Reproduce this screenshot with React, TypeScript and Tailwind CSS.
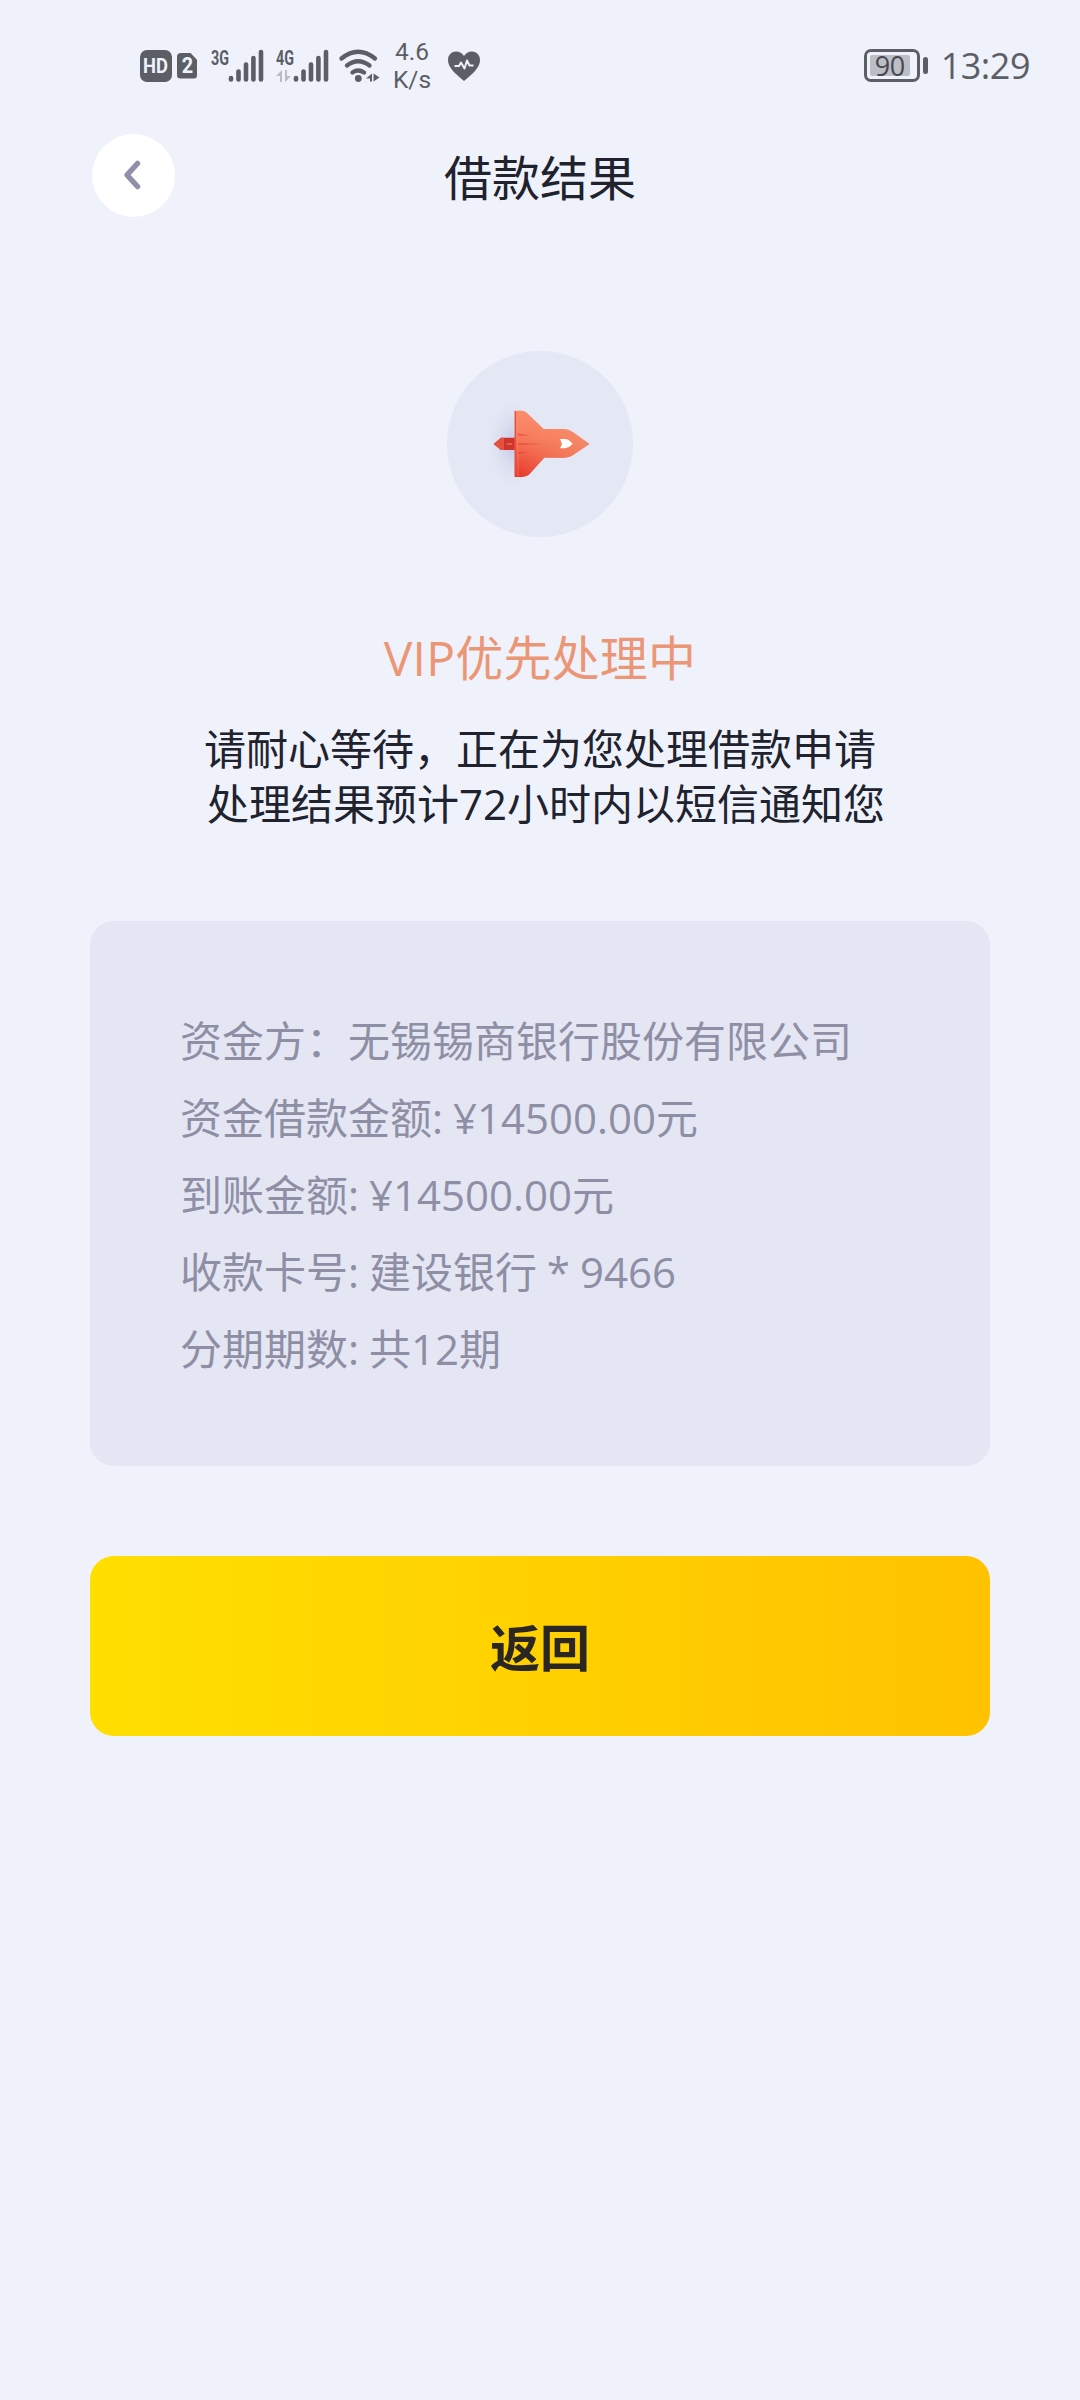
import React from "react";

const INK = "#5c5e66";

function SimBadges() {
  return (
    <div className="flex items-center gap-[5px] text-[#eff2fa]">
      <div className="flex h-[32px] w-[32px] items-center justify-center rounded-[7px] bg-[#5c5e66]">
        <span className="inline-block scale-x-[0.92] font-['Roboto',sans-serif] text-[20px] leading-none font-bold">HD</span>
      </div>
      <div className="flex h-[26px] w-[20px] items-center justify-center rounded-[4px] bg-[#5c5e66] [clip-path:polygon(0_0,65%_0,100%_28%,100%_100%,0_100%)]">
        <span className="inline-block scale-x-[0.9] font-['Roboto',sans-serif] text-[22px] leading-none font-bold">2</span>
      </div>
    </div>
  );
}

function Signal({ label, arrows }: { label: string; arrows?: boolean }) {
  return (
    <svg width="54" height="56" viewBox="0 -10 54 56" fill={INK}>
      <text x="0" y="16.500" fontSize="20.5" fontWeight="700" fontFamily="Roboto, sans-serif" textLength="18" lengthAdjust="spacingAndGlyphs">
        {label}
      </text>
      {arrows && (
        <g fill="#b9bbc4">
          <path d="M0 28L6 22V34H4V28Z" />
          <path d="M9 22H11V28H15L9 34Z" />
        </g>
      )}
      <g stroke={INK} strokeWidth="4.6" strokeLinecap="round">
        <path d="M20 31.500V30" />
        <path d="M27.500 31.500V23.500" />
        <path d="M35 31.500V16.500" />
        <path d="M42.400 31.500V10" />
        <path d="M50 31.500V4" />
      </g>
    </svg>
  );
}

function Wifi() {
  return (
    <svg width="40" height="36" viewBox="0 0 40 36" className="overflow-visible">
      <g fill="none" stroke={INK} strokeWidth="4.4" strokeLinecap="round">
        <path d="M2.500 10.500Q19 -3 36 10.500" />
        <path d="M8 17.500Q19 9 30.500 17.500" />
        <path d="M13.500 24.500Q19.200 20.700 25 24.500" />
      </g>
      <circle cx="19.300" cy="30.500" r="3.400" fill={INK} />
      <path d="M33 25.500V33.500H31V30.500H27ZM34.500 25.500L40.500 29.500L34.500 33.500Z" fill={INK} />
    </svg>
  );
}

function Heart() {
  return (
    <svg width="34" height="32" viewBox="0 0 34 32">
      <path d="M17 31C9 24 1 18 1 10C1 4.500 5 1.500 9 1.500C12.500 1.500 15.500 3.500 17 6C18.500 3.500 21.500 1.500 25 1.500C29 1.500 33 4.500 33 10C33 18 25 24 17 31Z" fill={INK} />
      <path d="M7.500 16H12L14 12.500L17.500 18.500L20 10.500L22.500 15.500H26.500" fill="none" stroke="#eff2fa" strokeWidth="2" strokeLinejoin="round" />
    </svg>
  );
}

function StatusBar() {
  return (
    <header className="flex h-[131px] items-start justify-between pr-[50px] pl-[140px] text-[#5c5e66]">
      <div className="flex h-[131px] items-center">
        <SimBadges />
        <div className="ml-[14px] flex gap-[11px]">
          <Signal label="3G" />
          <Signal label="4G" arrows />
        </div>
        <div className="ml-[9px]">
          <Wifi />
        </div>
        <div className="ml-[14px] flex w-[38px] flex-col items-center font-['Roboto',sans-serif] text-[24.5px] leading-[28px]">
          <span>4.6</span>
          <span>K/s</span>
        </div>
        <div className="ml-[16px]">
          <Heart />
        </div>
      </div>
      <div className="flex h-[131px] items-center">
        <div className="flex h-[33px] w-[56px] rounded-[7px] border-[3px] border-[#5c5e66] p-[3px] pr-[7px]">
          <div className="flex flex-1 items-center justify-center rounded-[2px] bg-[#bcbec6] font-['Open_Sans',sans-serif] text-[27px] leading-none tracking-[-0.5px] text-[#45474f]">
            90
          </div>
        </div>
        <div className="ml-[3px] h-[17px] w-[5px] rounded-full bg-[#5c5e66]" />
        <span className="ml-[13px] font-['Open_Sans',sans-serif] text-[36px] leading-none tracking-[-0.5px]">13:29</span>
      </div>
    </header>
  );
}

function Rocket() {
  return (
    <svg width="186" height="186" viewBox="51 33 558 558">
      <defs>
        <linearGradient id="body" x1="0" y1="0" x2="0" y2="1">
          <stop offset="0" stopColor="#fb8d6c" />
          <stop offset="0.4" stopColor="#f8785a" />
          <stop offset="1" stopColor="#e63226" />
        </linearGradient>
        <linearGradient id="nose" x1="0" y1="0" x2="1" y2="0">
          <stop offset="0" stopColor="#f39a78" stopOpacity="0" />
          <stop offset="0.55" stopColor="#f8916e" stopOpacity="0.45" />
          <stop offset="1" stopColor="#f08a68" stopOpacity="0.9" />
        </linearGradient>
        <radialGradient id="glow">
          <stop offset="0" stopColor="#b6bddf" stopOpacity="0.7" />
          <stop offset="1" stopColor="#d5d9ee" stopOpacity="0" />
        </radialGradient>
      </defs>
      <ellipse cx="246" cy="312" rx="68" ry="128" fill="url(#glow)" />
      <path d="M191 312L213 293H256V330H213Z" fill="#cf342f" />
      <path d="M191 312L213 293H222V330H213Z" fill="#e4513d" />
      <path d="M230 312H246" stroke="#f28a55" strokeWidth="3" />
      <path d="M254 212H274Q284 212 291 219L341 267H400Q416 267 428 276L478 312L428 346Q418 353 404 353H343L299 402Q290 411 278 411H254Z" fill="url(#body)" />
      <path d="M254 212H274Q284 212 291 219L341 267H400Q416 267 428 276L478 312L428 346Q418 353 404 353H343L299 402Q290 411 278 411H254Z" fill="url(#nose)" />
      <path d="M256 214V409" stroke="#e4533e" strokeWidth="4" />
      <path d="M264 214V409" stroke="#ff9672" strokeOpacity="0.5" strokeWidth="3" />
      <path d="M264 280L300 287H264ZM264 309L346 312L264 315ZM264 336H298L264 342Z" fill="#d93c2c" fillOpacity="0.5" />
      <path d="M390 297H407Q418 299 428 312Q418 323 405 325H390L396 312Z" fill="#ffffff" />
    </svg>
  );
}

const details = [
  "资金方：无锡锡商银行股份有限公司",
  "资金借款金额: ¥14500.00元",
  "到账金额: ¥14500.00元",
  "收款卡号: 建设银行 * 9466",
  "分期期数: 共12期",
];

export default function App() {
  return (
    <div className="min-h-[2400px] w-[1080px] bg-[#eff2fa] font-['Open_Sans','Noto_Sans_CJK_SC',sans-serif]">
      <StatusBar />
      <nav className="grid h-[88px] grid-cols-[1fr_auto_1fr] items-center px-[92px]">
        <button className="flex h-[83px] w-[83px] items-center justify-center rounded-full bg-white pr-[3px]" aria-label="返回">
          <svg width="20" height="32" viewBox="0 0 20 32" fill="none">
            <path d="M15.500 4.500L5 16L15.500 27.500" stroke="#8f8fa9" strokeWidth="5.500" strokeLinecap="round" strokeLinejoin="round" />
          </svg>
        </button>
        <h1 className="pt-[5px] text-[48px] leading-[60px] text-[#20222e]">借款结果</h1>
      </nav>
      <main className="flex flex-col px-[90px] pt-[132px]">
        <div className="flex h-[186px] w-[186px] self-center rounded-full bg-[#e4e7f4]">
          <Rocket />
        </div>
        <h2 className="mt-[85px] text-center text-[48px] leading-[72px] tracking-[0.2px] text-[#eb9676]">VIP优先处理中</h2>
        <div className="mt-[27px] text-center text-[42px] leading-[55px] text-[#20222e]">
          <p>请耐心等待，正在为您处理借款申请</p>
          <p className="pl-[12px]">处理结果预计72小时内以短信通知您</p>
        </div>
        <section className="mt-[90px] flex h-[545px] flex-col justify-center rounded-[24px] bg-[#e4e6f4] px-[90px] pt-px text-[42px] leading-[77px] text-[#8e8fa5] [word-spacing:-1px]">
          {details.map((line) => (
            <p key={line} className="whitespace-nowrap">{line}</p>
          ))}
        </section>
        <button className="mt-[90px] flex h-[180px] items-center justify-center rounded-[24px] bg-linear-to-r from-[#ffdf00] to-[#ffc200] pt-[4px] text-[50px] font-bold text-[#2a2622]">
          返回
        </button>
      </main>
    </div>
  );
}
